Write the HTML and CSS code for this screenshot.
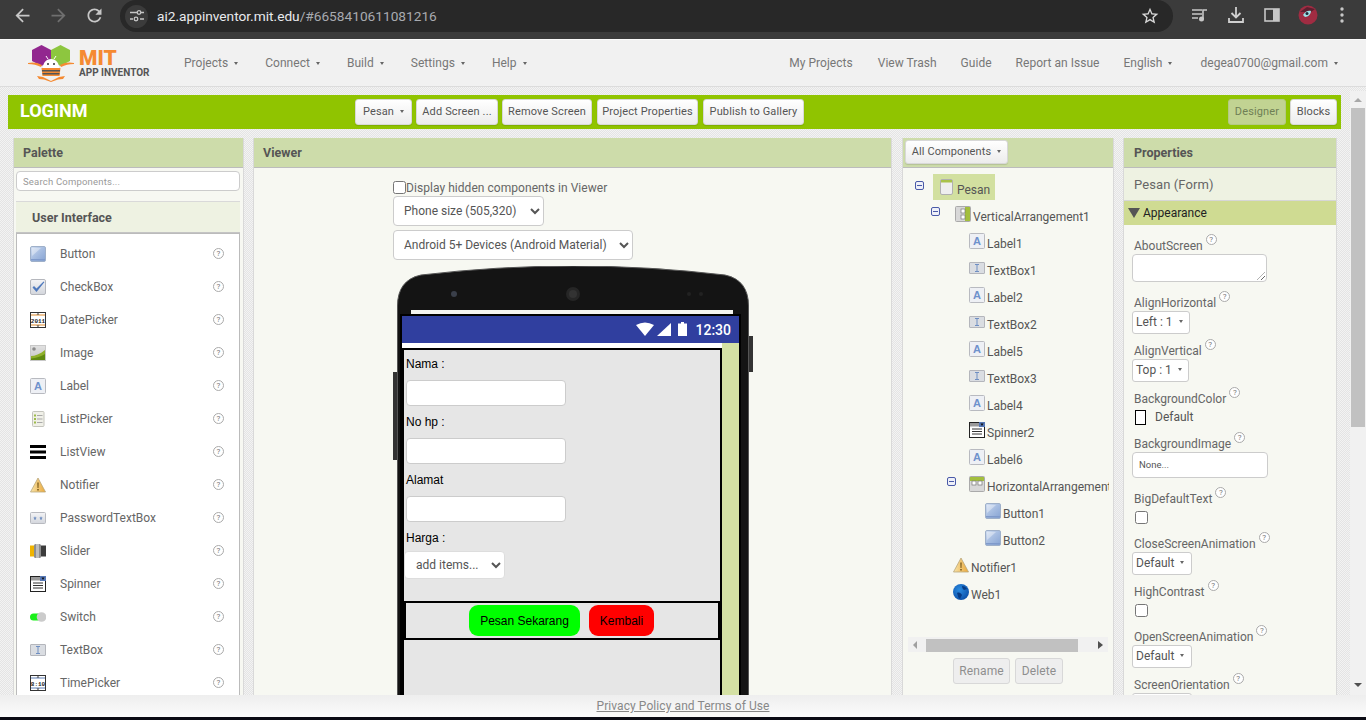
FILE: index.html
```html
<!DOCTYPE html>
<html lang="en">
<head>
<meta charset="utf-8">
<title>MIT App Inventor</title>
<link rel="stylesheet" href="styles.css">
</head>
<body>
<svg class="sprite" width="0" height="0" aria-hidden="true">
  <defs>
    <linearGradient id="gBtn" x1="0" y1="0" x2="1" y2="1"><stop offset="0" stop-color="#d6e2f3"/><stop offset=".45" stop-color="#a9bfe2"/><stop offset="1" stop-color="#86a3d3"/></linearGradient>
    <linearGradient id="gBox" x1="0" y1="0" x2="0" y2="1"><stop offset="0" stop-color="#f4f4f6"/><stop offset="1" stop-color="#d3d6dc"/></linearGradient>
    <linearGradient id="gImg" x1="0" y1="0" x2="0" y2="1"><stop offset="0" stop-color="#e2e2e2"/><stop offset="1" stop-color="#c4c4c4"/></linearGradient>
    <linearGradient id="gWarn" x1="0" y1="0" x2="1" y2="0"><stop offset="0" stop-color="#f7e3a8"/><stop offset="1" stop-color="#eba93c"/></linearGradient>
    <radialGradient id="gWeb" cx=".4" cy=".35" r=".7"><stop offset="0" stop-color="#2a8be0"/><stop offset="1" stop-color="#0a4ea8"/></radialGradient>
    <symbol id="i-button" viewBox="0 0 16 16"><rect x=".5" y=".5" width="15" height="15" rx="1.5" fill="url(#gBtn)" stroke="#9fb0c9"/><path d="M1 13h14v1.5H1z" fill="#7f9acb"/><path d="M2 2h9L2 10z" fill="#fff" opacity=".35"/></symbol>
    <symbol id="i-check" viewBox="0 0 16 16"><rect x=".5" y=".5" width="15" height="15" rx="1.5" fill="url(#gBox)" stroke="#b5b7bd"/><path d="M2.5 8.5l4 4.5L14.5 3l-1-.5L6.5 9.5l-2.5-2.5z" fill="#4f79bd"/></symbol>
    <symbol id="i-date" viewBox="0 0 16 16"><rect x=".5" y=".5" width="15" height="15" fill="#fff" stroke="#333"/><path d="M1 3h14M1 13h14" stroke="#e08a2a"/><path d="M8 1l1.5 1.5h-3zM8 15l1.5-1.5h-3z" fill="#333"/><text x="8" y="10.500" class="tiny">2011</text></symbol>
    <symbol id="i-image" viewBox="0 0 16 16"><rect x=".5" y=".5" width="15" height="15" fill="url(#gImg)" stroke="#c8c8c8"/><circle cx="4" cy="4" r="1.8" fill="#8c8c8c"/><path d="M1 15V11C5 11 10 9 15 5V15z" fill="#8fb02a"/><path d="M1 15V13.5C6 13 11 11.5 15 9V15z" fill="#5f8a10"/></symbol>
    <symbol id="i-label" viewBox="0 0 16 16"><rect x=".5" y=".5" width="15" height="15" rx="1" fill="#eef0f5" stroke="#b8bac0"/><text x="8" y="12" class="glyph">A</text></symbol>
    <symbol id="i-listpicker" viewBox="0 0 16 16"><rect x="2.5" y=".5" width="11.5" height="15" rx="1" fill="#f0f0e8" stroke="#c4c4bc"/><path d="M4 3.5h2v2H4zM4 7h2v2H4zM4 10.5h2v2H4z" fill="#9dbb4a"/><path d="M7 4.500h5.500M7 8h5.500M7 11.500h5.500" stroke="#a9a9a9"/></symbol>
    <symbol id="i-listview" viewBox="0 0 16 16"><path d="M0 1h16v3H0zM0 6.500h16v3H0zM0 12h16v3H0z"/></symbol>
    <symbol id="i-warn" viewBox="0 0 16 16"><path d="M8 1L15.500 15H.5z" fill="url(#gWarn)" stroke="#b9a77c" stroke-width=".8"/><path d="M7.300 5.500h1.400l-.2 5.500h-1zM7.200 12h1.600v1.600H7.200z" fill="#7a5a1c"/></symbol>
    <symbol id="i-pass" viewBox="0 0 16 16"><rect x=".5" y="2.500" width="15" height="11" rx="1" fill="url(#gBox)" stroke="#b8bac0"/><path d="M5 6.200l.6 1.300 1.200.3-1 .8.200 1.300-1-.7-1 .7.200-1.300-1-.8 1.200-.3zM11 6.200l.6 1.300 1.200.3-1 .8.200 1.300-1-.7-1 .7.200-1.300-1-.8 1.200-.3z" fill="#6c8cc0"/></symbol>
    <symbol id="i-slider" viewBox="0 0 16 16"><rect y="2.500" width="5" height="11" fill="#f0b400"/><rect x="10" y="2.500" width="6" height="11" fill="#3c3c3c"/><rect x="4" y="1" width="7" height="14" rx="1.500" fill="#8d8d8d"/><rect x="6" y="1" width="3" height="14" fill="#bdbdbd"/></symbol>
    <symbol id="i-spinner" viewBox="0 0 16 16"><rect x=".5" y=".5" width="15" height="15" fill="#fff" stroke="#222"/><rect x="1" y="1" width="14" height="3.500" fill="#9a9a9a"/><rect x="10" y="0" width="6" height="5" fill="#5577b5"/><path d="M11.500 1.500h3l-1.500 2.500z" fill="#111"/><path d="M3 7h10M3 9.500h10M3 12h10" stroke="#333"/></symbol>
    <symbol id="i-switch" viewBox="0 0 16 16"><rect y="4.500" width="12" height="7" rx="3.500" fill="#1aef1a"/><circle cx="11.500" cy="8" r="4.800" fill="#cbcbcb"/></symbol>
    <symbol id="i-textbox" viewBox="0 0 16 16"><rect x=".5" y="2.500" width="15" height="11" rx=".5" fill="#dadde2" stroke="#b4b6bc"/><path d="M6 4.500h4M6 11.500h4M8 4.500v7" stroke="#6f8fc2" fill="none"/></symbol>
    <symbol id="i-time" viewBox="0 0 16 16"><rect x=".5" y=".5" width="15" height="15" fill="#fff" stroke="#333"/><path d="M1 3h14M1 13h14" stroke="#5f7fb5"/><path d="M8 1l1.500 1.500h-3zM8 15l1.500-1.500h-3z" fill="#333"/><text x="8" y="10.500" class="tiny">8:10</text></symbol>
    <symbol id="i-form" viewBox="0 0 16 16"><rect x="1.500" y=".5" width="12" height="15" rx="1.500" fill="#eeeeee" stroke="#b0b0b0"/><path d="M2 1h11v2.500H2z" fill="#a9c24a"/></symbol>
    <symbol id="i-va" viewBox="0 0 16 16"><rect x=".5" y=".5" width="15" height="15" rx="1" fill="#d8d8d8" stroke="#aaa"/><rect x="10" y="1" width="5" height="14" fill="#a3bf3d"/><rect x="6" y="3" width="4" height="4" fill="#fff" stroke="#777" stroke-width=".7"/><rect x="6" y="9" width="4" height="4" fill="#fff" stroke="#777" stroke-width=".7"/></symbol>
    <symbol id="i-ha" viewBox="0 0 16 16"><rect x=".5" y=".5" width="15" height="15" rx="1" fill="#d8d8d8" stroke="#aaa"/><rect x="1" y="1" width="14" height="4" fill="#a3bf3d"/><rect x="3" y="5" width="4" height="4" fill="#fff" stroke="#777" stroke-width=".7"/><rect x="9" y="5" width="4" height="4" fill="#fff" stroke="#777" stroke-width=".7"/></symbol>
    <symbol id="i-web" viewBox="0 0 16 16"><circle cx="8" cy="8" r="8" fill="url(#gWeb)"/><path d="M4 9c2-1 4 0 5 2l-2 4c-2-1-2-3-3-6zM9 2c2 0 4 1 5 3l-3 1c-1-1-2-2-2-4z" fill="#073b85"/></symbol>
  </defs>
</svg>

<div class="chrome">
  <div class="nav-icons">
    <span class="cicon"><svg width="21" height="21" viewBox="0 0 24 24"><path fill="#c7c7c7" d="M20 11H7.830l5.590-5.590L12 4l-8 8 8 8 1.410-1.410L7.830 13H20v-2z"/></svg></span>
    <span class="cicon"><svg width="21" height="21" viewBox="0 0 24 24"><path fill="#6f6f6f" d="M4 11h12.170l-5.590-5.590L12 4l8 8-8 8-1.410-1.410L16.170 13H4v-2z"/></svg></span>
    <span class="cicon"><svg width="21" height="21" viewBox="0 0 24 24"><path fill="#c7c7c7" d="M17.650 6.350C16.200 4.900 14.210 4 12 4c-4.420 0-7.990 3.580-7.990 8s3.570 8 7.990 8c3.730 0 6.840-2.550 7.730-6h-2.080c-.82 2.330-3.040 4-5.650 4-3.310 0-6-2.690-6-6s2.690-6 6-6c1.660 0 3.140.69 4.220 1.780L13 11h7V4l-2.350 2.350z"/></svg></span>
  </div>
  <div class="omnibox">
    <span class="tune"><svg width="14" height="12" viewBox="0 0 14 12"><path d="M0 2.500h7M0 9h3M10 9h4M11 2.500h3" stroke="#c7c7c7" stroke-width="1.500"/><circle cx="9" cy="2.500" r="1.800" fill="none" stroke="#c7c7c7" stroke-width="1.300"/><circle cx="6" cy="9" r="1.800" fill="none" stroke="#c7c7c7" stroke-width="1.300"/></svg></span>
    <span class="url">ai2.appinventor.mit.edu<span class="url-dim">/#6658410611081216</span></span>
    <svg class="star" width="20" height="20" viewBox="0 0 24 24"><path fill="#d8d8d8" d="M22 9.240l-7.190-.62L12 2 9.190 8.630 2 9.240l5.460 4.730L5.820 21 12 17.270 18.180 21l-1.630-7.030L22 9.240zM12 15.400l-3.760 2.270 1-4.280-3.320-2.880 4.380-.38L12 6.100l1.710 4.040 4.380.38-3.320 2.880 1 4.280L12 15.400z"/></svg>
  </div>
  <div class="ext-icons">
    <span class="cicon"><svg width="18" height="14" viewBox="0 0 18 14"><path d="M1 2h10M1 6h10M1 10h6" stroke="#c7c7c7" stroke-width="1.600"/><path d="M12 11V2h4" stroke="#c7c7c7" stroke-width="1.600" fill="none"/><circle cx="10.500" cy="11" r="2.500" fill="#c7c7c7"/></svg></span>
    <span class="cicon"><svg width="18" height="18" viewBox="0 0 18 18"><path d="M9 1v10M4.500 7L9 11.500 13.500 7M2 12v4h14v-4" stroke="#d0d0d0" stroke-width="1.800" fill="none"/></svg></span>
    <span class="cicon"><svg width="16" height="14" viewBox="0 0 16 14"><rect x="1" y="1" width="14" height="12" fill="none" stroke="#c7c7c7" stroke-width="1.600"/><rect x="9" y="1" width="6" height="12" fill="#c7c7c7"/></svg></span>
    <span class="cicon"><svg width="20" height="20" viewBox="0 0 20 20"><circle cx="10" cy="10" r="9.500" fill="#a02c42"/><path d="M2 7l7-5 8 2-4 3z" fill="#5c2030"/><path d="M5 10c2-4 6-5 8-4 0 3-3 6-6 6z" fill="#9fe3e8"/><circle cx="9" cy="8.500" r="1.500" fill="#1d2b3a"/></svg></span>
    <span class="cicon cicon-dots"><svg width="4" height="16" viewBox="0 0 4 16"><circle cx="2" cy="2" r="1.700" fill="#c7c7c7"/><circle cx="2" cy="8" r="1.700" fill="#c7c7c7"/><circle cx="2" cy="14" r="1.700" fill="#c7c7c7"/></svg></span>
  </div>
</div>

<header class="appbar">
  <div class="logo">
    <svg width="46" height="38" viewBox="28 42 46 38">
      <path d="M41.500 43l9.500 5v11l-9.500 5-9.500-5V48z" fill="#92278f"/>
      <path d="M60.500 43l9.500 5v11l-9.500 5-9.500-5V48z" fill="#8dc63f"/>
      <path d="M28 61c4-1 9-1 14 2l-1 2c-4-2-8-3-13-3zM74 61c-4-1-9-1-14 2l1 2c4-2 8-3 13-3z" fill="#f58a32"/>
      <path d="M46 54l2 3M56 54l-2 3" stroke="#fff"/>
      <path d="M43 66c0-6 4-9 8-9s8 3 8 9z" fill="#fff"/>
      <path d="M41.500 66h19l-1 8h-17z" fill="#f58a32"/>
      <path d="M42 68h18v1.500H42zM42.500 71h17v1.500h-17z" fill="#555"/>
      <path d="M37 74l6 1 8 4 8-4 6-1-2 3-5 .5-7 2.500-7-2.500-5-.5z" fill="#f58a32"/>
      <circle cx="48" cy="62" r="1" fill="#333"/><circle cx="54" cy="62" r="1" fill="#333"/>
    </svg>
    <div class="logo-text"><span class="logo-mit">MIT</span><span class="logo-app">APP INVENTOR</span></div>
  </div>
  <nav class="menu menu-left">
    <span class="mi">Projects<i class="caret"></i></span>
    <span class="mi">Connect<i class="caret"></i></span>
    <span class="mi">Build<i class="caret"></i></span>
    <span class="mi">Settings<i class="caret"></i></span>
    <span class="mi">Help<i class="caret"></i></span>
  </nav>
  <nav class="menu menu-right">
    <span class="mi mi-my">My Projects</span>
    <span class="mi mi-24">View Trash</span>
    <span class="mi mi-24">Guide</span>
    <span class="mi mi-24">Report an Issue</span>
    <span class="mi mi-lang">English<i class="caret"></i></span>
    <span class="mi mi-user">degea0700@gmail.com<i class="caret"></i></span>
  </nav>
</header>

<div class="stage">
  <main class="workspace">
    <div class="toolbar">
      <h1 class="project">LOGINM</h1>
      <div class="tb-group">
        <button class="btn btn-pesan">Pesan<i class="caret"></i></button>
        <button class="btn btn-add">Add Screen ...</button>
        <button class="btn btn-rem">Remove Screen</button>
        <button class="btn btn-prop">Project Properties</button>
        <button class="btn btn-pub">Publish to Gallery</button>
      </div>
      <div class="tb-group tb-right">
        <button class="btn btn-on">Designer</button>
        <button class="btn btn-blocks">Blocks</button>
      </div>
    </div>

    <div class="panels">
      <section class="panel p-palette">
        <h2 class="phead">Palette</h2>
        <div class="search"><input class="search-input" type="text" placeholder="Search Components..."></div>
        <div class="drawer">User Interface</div>
        <ul class="plist">
          <li><svg class="ic"><use href="#i-button"/></svg><span class="pname">Button</span><span class="help">?</span></li>
          <li><svg class="ic"><use href="#i-check"/></svg><span class="pname">CheckBox</span><span class="help">?</span></li>
          <li><svg class="ic"><use href="#i-date"/></svg><span class="pname">DatePicker</span><span class="help">?</span></li>
          <li><svg class="ic"><use href="#i-image"/></svg><span class="pname">Image</span><span class="help">?</span></li>
          <li><svg class="ic"><use href="#i-label"/></svg><span class="pname">Label</span><span class="help">?</span></li>
          <li><svg class="ic"><use href="#i-listpicker"/></svg><span class="pname">ListPicker</span><span class="help">?</span></li>
          <li><svg class="ic"><use href="#i-listview"/></svg><span class="pname">ListView</span><span class="help">?</span></li>
          <li><svg class="ic"><use href="#i-warn"/></svg><span class="pname">Notifier</span><span class="help">?</span></li>
          <li><svg class="ic"><use href="#i-pass"/></svg><span class="pname">PasswordTextBox</span><span class="help">?</span></li>
          <li><svg class="ic"><use href="#i-slider"/></svg><span class="pname">Slider</span><span class="help">?</span></li>
          <li><svg class="ic"><use href="#i-spinner"/></svg><span class="pname">Spinner</span><span class="help">?</span></li>
          <li><svg class="ic"><use href="#i-switch"/></svg><span class="pname">Switch</span><span class="help">?</span></li>
          <li><svg class="ic"><use href="#i-textbox"/></svg><span class="pname">TextBox</span><span class="help">?</span></li>
          <li><svg class="ic"><use href="#i-time"/></svg><span class="pname">TimePicker</span><span class="help">?</span></li>
        </ul>
      </section>

      <section class="panel p-viewer">
        <h2 class="phead">Viewer</h2>
        <div class="viewer-body">
          <label class="hidden-toggle"><input class="cb" type="checkbox">Display hidden components in Viewer</label>
          <select class="sel sel-size"><option>Phone size (505,320)</option></select>
          <select class="sel sel-theme"><option>Android 5+ Devices (Android Material)</option></select>
          <div class="phone">
            <svg class="phone-shell" width="352" height="440" viewBox="0 0 352 440"><path d="M.5 40Q.5 14 24 9Q176 -9 328 9Q351.500 14 351.500 40V440H.5z" fill="#141414" stroke="#555" stroke-width="1"/><circle cx="57" cy="28" r="3" fill="#3a3f4a"/><circle cx="176" cy="28" r="7" fill="#262626"/><circle cx="176" cy="28" r="4" fill="#333"/><circle cx="292" cy="28" r="2" fill="#222"/><circle cx="304" cy="28" r="2" fill="#222"/></svg>
            <i class="side-btn side-left"></i>
            <i class="side-btn side-right"></i>
            <div class="speaker-strip"></div>
            <div class="screen">
              <div class="statusbar">
                <svg width="56" height="15" viewBox="0 0 56 15"><path d="M0 3Q9-2 18 3L9 14z" fill="#fff"/><path d="M21 14L35 1V14z" fill="#fff"/><path d="M42 1.500h3V0h3v1.500h3V14H42z" fill="#fff"/></svg>
                <span class="clock">12:30</span>
              </div>
              <div class="screen-main">
                <div class="form-col">
                  <div class="form-top"></div>
                  <div class="form">
                    <div class="fl">Nama :</div>
                    <div class="tb"></div>
                    <div class="fl">No hp :</div>
                    <div class="tb"></div>
                    <div class="fl">Alamat</div>
                    <div class="tb"></div>
                    <div class="fl">Harga :</div>
                    <select class="sel sel-items"><option>add items...</option></select>
                    <div class="ha">
                      <span class="mbtn mbtn-green">Pesan Sekarang</span>
                      <span class="mbtn mbtn-red">Kembali</span>
                    </div>
                    <div class="form-rest"></div>
                  </div>
                </div>
                <div class="screen-side"></div>
              </div>
            </div>
          </div>
        </div>
      </section>

      <section class="panel p-tree">
        <div class="phead phead-btn"><button class="btn btn-all">All Components<i class="caret"></i></button></div>
        <div class="tree">
          <div class="node n-root"><span class="tg"></span><span class="sel-node"><svg class="ic"><use href="#i-form"/></svg><span class="nt">Pesan</span></span></div>
          <div class="node n-va"><span class="tg"></span><svg class="ic"><use href="#i-va"/></svg><span class="nt">VerticalArrangement1</span></div>
          <div class="node lv2"><svg class="ic"><use href="#i-label"/></svg><span class="nt">Label1</span></div>
          <div class="node lv2"><svg class="ic"><use href="#i-textbox"/></svg><span class="nt">TextBox1</span></div>
          <div class="node lv2"><svg class="ic"><use href="#i-label"/></svg><span class="nt">Label2</span></div>
          <div class="node lv2"><svg class="ic"><use href="#i-textbox"/></svg><span class="nt">TextBox2</span></div>
          <div class="node lv2"><svg class="ic"><use href="#i-label"/></svg><span class="nt">Label5</span></div>
          <div class="node lv2"><svg class="ic"><use href="#i-textbox"/></svg><span class="nt">TextBox3</span></div>
          <div class="node lv2"><svg class="ic"><use href="#i-label"/></svg><span class="nt">Label4</span></div>
          <div class="node lv2"><svg class="ic"><use href="#i-spinner"/></svg><span class="nt">Spinner2</span></div>
          <div class="node lv2"><svg class="ic"><use href="#i-label"/></svg><span class="nt">Label6</span></div>
          <div class="node n-ha"><span class="tg"></span><svg class="ic"><use href="#i-ha"/></svg><span class="nt">HorizontalArrangement1</span></div>
          <div class="node lv3"><svg class="ic"><use href="#i-button"/></svg><span class="nt">Button1</span></div>
          <div class="node lv3"><svg class="ic"><use href="#i-button"/></svg><span class="nt">Button2</span></div>
          <div class="node lv1"><svg class="ic"><use href="#i-warn"/></svg><span class="nt">Notifier1</span></div>
          <div class="node lv1"><svg class="ic"><use href="#i-web"/></svg><span class="nt">Web1</span></div>
        </div>
        <div class="hscroll"><i class="arr arr-l"></i><span class="hthumb"></span><i class="arr arr-r"></i></div>
        <div class="tree-actions">
          <button class="btn btn-off btn-rename">Rename</button>
          <button class="btn btn-off btn-delete">Delete</button>
        </div>
      </section>

      <section class="panel p-props">
        <h2 class="phead phead-props">Properties</h2>
        <div class="form-title">Pesan (Form)</div>
        <div class="group"><i class="tri"></i>Appearance</div>
        <div class="props">
          <div class="prop"><div class="pl">AboutScreen<span class="help">?</span></div><div class="ctl-area"></div></div>
          <div class="prop"><div class="pl">AlignHorizontal<span class="help">?</span></div><div class="dd dd-left">Left : 1<i class="caret"></i></div></div>
          <div class="prop"><div class="pl">AlignVertical<span class="help">?</span></div><div class="dd dd-top">Top : 1<i class="caret"></i></div></div>
          <div class="prop"><div class="pl">BackgroundColor<span class="help">?</span></div><div class="colorrow"><i class="swatch"></i>Default</div></div>
          <div class="prop"><div class="pl">BackgroundImage<span class="help">?</span></div><div class="ctl-none">None...</div></div>
          <div class="prop"><div class="pl">BigDefaultText<span class="help">?</span></div><div class="cbrow"><input class="cb" type="checkbox"></div></div>
          <div class="prop"><div class="pl">CloseScreenAnimation<span class="help">?</span></div><div class="dd dd-def">Default<i class="caret"></i></div></div>
          <div class="prop"><div class="pl">HighContrast<span class="help">?</span></div><div class="cbrow"><input class="cb" type="checkbox"></div></div>
          <div class="prop"><div class="pl">OpenScreenAnimation<span class="help">?</span></div><div class="dd dd-def">Default<i class="caret"></i></div></div>
          <div class="prop"><div class="pl">ScreenOrientation<span class="help">?</span></div><div class="dd dd-def">Unspecified<i class="caret"></i></div></div>
        </div>
      </section>
    </div>
  </main>
  <aside class="vscroll"><i class="varr varr-up"></i><span class="vthumb"></span><i class="varr varr-down"></i></aside>
</div>

<footer class="footer"><a class="terms" href="#">Privacy Policy and Terms of Use</a></footer>
</body>
</html>
```

FILE: styles.css
```css
* { box-sizing: border-box; }
html, body { margin: 0; height: 720px; overflow: hidden; }
body {
  font-family: Roboto, "Liberation Sans", sans-serif;
  font-size: 12px;
  color: #555;
  background: repeating-conic-gradient(#e4e4e4 0 25%, #f3f3f3 0 50%) 0 0 / 2px 2px;
}
.sprite { position: absolute; }
.tiny { font: 700 6px "Liberation Mono", monospace; text-anchor: middle; fill: #222; }
.glyph { font: 700 11px "Liberation Sans", sans-serif; text-anchor: middle; fill: #6f92cc; }
button { font-family: inherit; }
i { font-style: normal; }

/* browser chrome */
.chrome { height: 39px; background: #3b3b3b; display: flex; align-items: flex-start; padding-left: 4px; }
.nav-icons, .ext-icons { display: flex; }
.cicon { width: 36px; height: 30px; display: flex; align-items: center; justify-content: center; }
.cicon-dots { width: 32px; }
.omnibox { margin-left: 8px; width: 1053px; height: 32px; border-radius: 16px; background: #282828; display: flex; align-items: center; padding: 0 13px 0 5px; }
.tune { width: 23px; height: 23px; border-radius: 50%; background: #3b3b3b; display: flex; align-items: center; justify-content: center; }
.url { margin-left: 9px; font-size: 13.700px; color: #e8eaed; flex: 1; }
.url-dim { color: #a8abb0; }
.ext-icons { margin-left: 9px; }

/* app header */
.appbar { height: 48px; background: #f1f1f1; border-top: 1px solid #fafafa; border-bottom: 1px solid #dcdcdc; display: flex; align-items: center; padding-left: 28px; position: relative; }
.logo { display: flex; width: 156px; align-items: center; }
.logo-text { display: flex; flex-direction: column; margin-left: 5px; }
.logo-mit { font: 900 21px/18px Roboto, sans-serif; color: #f58a32; }
.logo-app { font: 700 10px/11px Roboto, sans-serif; color: #555; }
.menu { display: flex; color: #777; }
.mi { display: inline-flex; align-items: center; font-size: 12px; letter-spacing: .03px; margin-right: 27px; }
.mi-my { margin-right: 25px; }
.mi-24 { margin-right: 24px; }
.mi-lang { margin-right: 28px; }
.menu-right { margin-left: auto; }
.menu-right .mi-user { margin-right: 28px; }
.caret { display: inline-block; width: 0; height: 0; margin-left: 6px; border-left: 2.5px solid transparent; border-right: 2.5px solid transparent; border-top: 3px solid #666; }

/* workspace */
.stage { display: flex; height: 633px; }
.workspace { width: 1350px; padding: 8px 0 0 8px; }
.toolbar { width: 1333px; height: 34px; background: #90c400; display: flex; align-items: center; padding: 0 4px 0 12px; }
.project { margin: 0 0 3px; width: 335px; font-size: 18px; font-weight: 700; color: #fff; }
.tb-group { display: flex; gap: 4px; }
.tb-right { margin-left: auto; }
.btn { height: 26px; padding: 0 0 2px; border: 1px solid #d8d8d8; border-radius: 3px; background: linear-gradient(#fff, #ececec); color: #555; font-size: 11px; letter-spacing: .15px; display: inline-flex; align-items: center; justify-content: center; box-shadow: 0 1px 1px rgba(0,0,0,.12); }
.btn-pesan { width: 57px; }
.btn-add { width: 82px; }
.btn-rem { width: 90px; }
.btn-prop { width: 101px; margin-left: 1px; }
.btn-pub { width: 101px; margin-left: 1px; }
.btn-on { width: 58px; background: #c1d392; border-color: #b4c984; color: #6f7f55; box-shadow: none; }
.btn-blocks { width: 47px; }

.panels { display: flex; margin: 9px 0 0 5px; height: 600px; gap: 9px; }
.panel { background: #f7f8f2; border: 1px solid #d9d9d9; border-top: 0; flex: none; overflow: hidden; }
.phead { margin: 0; height: 30px; background: #cddcaa; border-bottom: 1px solid #bcbcbc; padding-left: 9px; font-size: 12.500px; font-weight: 700; line-height: 29px; color: #555; }
.phead-props { padding-left: 10px; }
.p-palette { width: 231px; }
.p-viewer { width: 639px; }
.p-tree { width: 212px; margin-left: 1px; }
.p-props { width: 214px; }

/* palette */
.search { padding: 3px 3px 0 2px; }
.search-input { display: block; width: 224px; height: 20px; border: 1px solid #ccc; border-radius: 4px; padding: 0 6px; font: 9.500px Roboto, sans-serif; background: #fff; letter-spacing: .2px; }
.search-input::placeholder { color: #999; }
.drawer { margin: 10px 3px 0 2px; height: 32px; background: #eef2e2; border-top: 1px solid #d9d9d9; border-bottom: 1px solid #c4c4c4; padding-left: 16px; line-height: 31px; font-size: 12.500px; font-weight: 700; color: #555; }
.plist { list-style: none; margin: 0 3px 0 2px; padding: 3px 0 0 13px; background: #fff; border: 1px solid #bbb; }
.plist li { height: 33px; display: flex; align-items: center; padding-right: 15px; }
.ic { width: 16px; height: 16px; flex: none; }
.pname { margin-left: 14px; flex: 1; color: #666; }
.help { display: inline-flex; align-items: center; justify-content: center; width: 11px; height: 11px; border: 1px solid #aaa; border-radius: 50%; font-size: 8px; line-height: 1; color: #777; background: #fff; flex: none; }

/* viewer */
.viewer-body { padding: 12px 0 0 139px; display: flex; flex-direction: column; align-items: flex-start; }
.hidden-toggle { display: flex; align-items: center; height: 15px; color: #666; letter-spacing: .05px; }
.cb { margin: 0; width: 13px; height: 13px; }
.sel { display: block; height: 30px; background: #fff; border: 1px solid #ccc; border-radius: 4px; padding: 0 6px; font: 12px Roboto, sans-serif; color: #555; }
.sel-size { width: 151px; margin-top: 1px; }
.sel-theme { width: 240px; margin-top: 4px; }

.phone { position: relative; width: 352px; height: 440px; margin: 6px 0 0 4px; padding: 44px 10px 0 5px; }
.phone-shell { position: absolute; left: 0; top: 0; }
.side-btn { position: absolute; background: #333; }
.side-left { left: -4px; top: 106px; width: 4px; height: 88px; }
.side-right { left: 352px; top: 70px; width: 4px; height: 36px; }
.speaker-strip { position: relative; height: 4px; margin: 0 6px 0 9px; background: #f4f4f0; }
.screen { position: relative; width: 341px; margin-left: -2px; border: 2px solid #000; border-bottom: 0; height: 400px; background: #000; }
.statusbar { height: 27px; background: #303f9f; display: flex; align-items: center; justify-content: flex-end; padding-right: 8px; }
.clock { margin-left: 3px; font-size: 14px; font-weight: 500; color: #fff; }
.screen-main { display: flex; height: 370px; }
.form-col { width: 320px; }
.form-top { height: 5px; background: #fff; }
.form { height: 365px; background: #e6e6e6; border: 2px solid #000; font: 12px "Liberation Sans", Arial, sans-serif; color: #000; }
.screen-side { width: 17px; background: #d4e0a4; }
.fl { height: 30px; line-height: 28px; padding-left: 2px; }
.tb { width: 160px; height: 26px; margin: 0 0 2px 2px; background: #fff; border: 1px solid #ccc; border-radius: 4px; }
.sel-items { width: 101px; height: 28px; margin-top: -3px; padding-left: 7px; border-color: #ddd; }
.ha { margin-top: 22px; height: 39px; border: 2px solid #000; display: flex; justify-content: center; align-items: center; gap: 9px; background: #e6e6e6; padding-right: 1px; }
.mbtn { height: 31px; border-radius: 9px; display: flex; align-items: center; justify-content: center; }
.mbtn-green { width: 111px; background: #0f0; }
.mbtn-red { width: 65px; background: #f00; }
.form-rest { height: 100px; }

/* tree */
.phead-btn { display: flex; align-items: flex-start; padding: 2px 0 0 2px; }
.btn-all { width: 103px; height: 24px; letter-spacing: .1px; }
.tree { height: 469px; padding-top: 5px; width: 206px; overflow: hidden; }
.node { height: 27px; display: flex; align-items: center; white-space: nowrap; color: #555; }
.nt { margin: 6px 0 0 2px; }
.tg { width: 9px; height: 9px; border: 1px solid #4a5aa8; border-radius: 2px; flex: none; background: linear-gradient(#4a5aa8, #4a5aa8) center / 5px 1px no-repeat, #eef0f8; }
.n-root { padding-left: 12px; }
.n-root .tg { margin: -2px 9px 0 0; }
.sel-node { height: 26px; display: flex; align-items: center; background: #d2e0a0; padding: 0 5px 0 6px; }
.n-va { padding-left: 28px; }
.n-va .tg { margin: -4px 15px 0 0; }
.n-ha { padding-left: 44px; }
.n-ha .tg { margin: -4px 13px 0 0; }
.lv1 { padding-left: 50px; }
.lv2 { padding-left: 66px; }
.lv3 { padding-left: 82px; }
.hscroll { margin: 0 5px; height: 15px; background: #f1f1f1; display: flex; align-items: center; padding-left: 5px; }
.hthumb { width: 152px; height: 13px; margin: 2px 0 0 9px; background: #c1c1c1; }
.arr { width: 0; height: 0; border-top: 4px solid transparent; border-bottom: 4px solid transparent; }
.arr-l { border-right: 4px solid #a0a0a0; }
.arr-r { border-left: 5px solid #505050; margin-left: 20px; }
.tree-actions { display: flex; gap: 5px; margin-top: 6px; padding-left: 50px; }
.btn-off { padding: 0; background: #eeeeee; color: #8e8e8e; font-size: 12px; box-shadow: none; }
.btn-rename { width: 57px; }
.btn-delete { width: 48px; }

/* properties */
.form-title { height: 33px; background: #eef2e2; border-bottom: 1px solid #d6d6d6; padding-left: 10px; line-height: 34px; font-size: 13px; color: #666; letter-spacing: .1px; }
.group { height: 24px; background: #cfdb92; display: flex; align-items: center; color: #222; padding-left: 4px; }
.tri { width: 0; height: 0; margin-right: 3px; border-left: 6px solid transparent; border-right: 6px solid transparent; border-top: 10px solid #555; }
.props { padding: 12px 0 0 8px; }
.prop { margin-bottom: 8px; }
.pl { height: 16px; line-height: 18px; display: flex; padding-left: 2px; margin-bottom: 1px; color: #666; white-space: nowrap; }
.pl .help { margin: -3px 0 0 3px; }
.ctl-area { width: 135px; height: 28px; margin-bottom: 12px; background: #fff; border: 1px solid #ccc; border-radius: 4px; position: relative; }
.ctl-area::after { content: ""; position: absolute; right: 1px; bottom: 1px; width: 8px; height: 8px; background: repeating-linear-gradient(135deg, transparent 0 2px, #666 2px 3px); clip-path: polygon(100% 0, 100% 100%, 0 100%); }
.dd { display: inline-flex; align-items: center; height: 23px; background: #fff; border: 1px solid #ccc; border-radius: 3px; padding: 0 0 2px 3px; color: #555; font-size: 12px; }
.dd-left { width: 58px; }
.dd-top { width: 57px; }
.dd-def { width: 60px; }
.colorrow { height: 20px; display: flex; align-items: center; padding-left: 3px; color: #555; }
.swatch { width: 11px; height: 15px; border: 1px solid #000; background: #fff; margin: 0 9px 0 0; }
.ctl-none { width: 136px; height: 26px; margin-bottom: 12px; background: #fff; border: 1px solid #ccc; border-radius: 4px; padding-left: 6px; line-height: 24px; font-size: 9.500px; color: #555; }
.cbrow { height: 20px; display: flex; align-items: center; padding: 1px 0 0 3px; }

/* page scrollbar */
.vscroll { width: 16px; margin-top: 4px; background: #f1f1f1; display: flex; flex-direction: column; align-items: center; position: relative; }
.vthumb { width: 14px; height: 319px; margin-top: 17px; background: #c1c1c1; }
.varr { position: absolute; width: 0; height: 0; border-left: 4px solid transparent; border-right: 4px solid transparent; }
.varr-up { top: 7px; border-bottom: 4px solid #a8a8a8; }
.varr-down { top: 592px; border-top: 4px solid #505050; }

/* footer */
.footer { position: fixed; left: 0; right: 0; bottom: 0; height: 25px; background: linear-gradient(#eeeeee, #fbfbfb); border-bottom: 3px solid #0b0b14; text-align: center; line-height: 22px; }
.terms { color: #888; font-size: 12px; letter-spacing: .08px; }
```
